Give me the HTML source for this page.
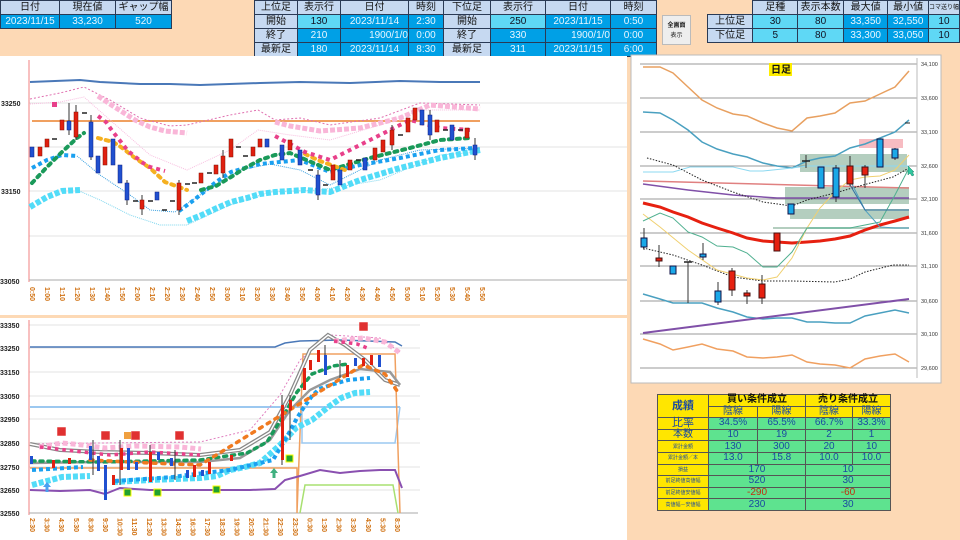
<!DOCTYPE html>
<html><head><meta charset="utf-8"><style>
*{margin:0;padding:0;box-sizing:border-box}
body{width:960px;height:540px;background:#fdd9b5;position:relative;overflow:hidden;font-family:"Liberation Sans","Noto Sans CJK JP",sans-serif}
.t{position:absolute;border-collapse:collapse;font-size:10px}
.t td{border:1px solid #2a3a55;text-align:center;padding:0;height:14px;line-height:12px;white-space:nowrap;overflow:hidden}
.h{background:#c6d9f1;color:#111}
.b{background:#00a0e6;color:#e8f6ff}
.c{background:#5fd8f5;color:#112}
.btn{position:absolute;left:662px;top:15px;width:29px;height:30px;background:#eeeeee;border:1px solid #bbb;font-size:6px;text-align:center;line-height:10px;padding-top:5px;color:#222}
.r{position:absolute;left:657px;top:394px;border-collapse:collapse;font-size:10px}
.r td{border:1px solid #555;text-align:center;padding:0;height:11.6px;line-height:10px;color:#1a4aa0;white-space:nowrap}
.y{background:#ffe600}
.g{background:#5ee38f}
.s{font-size:5px}
</style></head><body>
<table class="t" style="left:0;top:0">
<tr><td class="h" style="width:59px">日付</td><td class="h" style="width:56px">現在値</td><td class="h" style="width:56px">ギャップ幅</td></tr>
<tr><td class="b">2023/11/15</td><td class="b">33,230</td><td class="b">520</td></tr>
</table>
<table class="t" style="left:254px;top:0">
<tr><td class="h" style="width:43px">上位足</td><td class="h" style="width:43px">表示行</td><td class="h" style="width:68px">日付</td><td class="h" style="width:35px">時刻</td><td class="h" style="width:47px">下位足</td><td class="h" style="width:55px">表示行</td><td class="h" style="width:65px">日付</td><td class="h" style="width:46px">時刻</td></tr>
<tr><td class="h">開始</td><td class="c">130</td><td class="b">2023/11/14</td><td class="b">2:30</td><td class="h">開始</td><td class="c">250</td><td class="b">2023/11/15</td><td class="b">0:50</td></tr>
<tr><td class="h">終了</td><td class="b">210</td><td class="b" style="text-align:right">1900/1/0</td><td class="b">0:00</td><td class="h">終了</td><td class="b">330</td><td class="b" style="text-align:right">1900/1/0</td><td class="b">0:00</td></tr>
<tr><td class="h">最新足</td><td class="b">180</td><td class="b">2023/11/14</td><td class="b">8:30</td><td class="h">最新足</td><td class="b">311</td><td class="b">2023/11/15</td><td class="b">6:00</td></tr>
</table>
<div class="btn"><b>全画面</b><br>表示</div>
<table class="t" style="left:707px;top:0">
<tr><td style="width:46px;background:#fdd9b5;border:none;border-bottom:1px solid #2a3a55"></td><td class="h" style="width:46px">足種</td><td class="h" style="width:46px">表示本数</td><td class="h" style="width:45px">最大値</td><td class="h" style="width:41px">最小値</td><td class="h" style="width:30px;font-size:6px">コマ送り幅</td></tr>
<tr><td class="h">上位足</td><td class="c">30</td><td class="c">80</td><td class="b">33,350</td><td class="b">32,550</td><td class="c">10</td></tr>
<tr><td class="h">下位足</td><td class="c">5</td><td class="c">80</td><td class="b">33,300</td><td class="b">33,050</td><td class="c">10</td></tr>
</table>

<svg style="position:absolute;left:0;top:0" width="960" height="540" font-family="Liberation Sans, sans-serif">
<rect x="0" y="56" width="627" height="259" fill="#fff"/>
<g stroke="#e3e3e3" stroke-width="1"><line x1="29" y1="103" x2="627" y2="103"/><line x1="29" y1="147" x2="627" y2="147"/><line x1="29" y1="191" x2="627" y2="191"/><line x1="29" y1="236" x2="627" y2="236"/></g>
<line x1="29" y1="60" x2="29" y2="282" stroke="#f08080"/>
<line x1="29" y1="280" x2="627" y2="280" stroke="#aaa"/>
<g font-size="7" fill="#222" font-weight="bold"><text x="1" y="106">33250</text><text x="1" y="194">33150</text><text x="0" y="284">33050</text></g>
<polyline fill="none" stroke="#4a78b8" stroke-width="2" points="30,82 80,80 100,82 140,84 170,84 200,85 260,83 300,82 350,83 400,81 440,82 480,82"/>
<line x1="32" y1="121" x2="480" y2="121" stroke="#f0a060" stroke-width="2"/>
<polyline fill="none" stroke="#e070b0" stroke-dasharray="2 2" points="30,99 60,93 84,87 110,100 140,118 170,126 187,125 230,115 258,110 275,120 300,118 330,125 380,118 420,103 480,105"/>
<polyline fill="none" stroke="#f8bfe0" stroke-dasharray="1 1" points="30,104 60,102 84,97 110,120 150,155 187,170 230,150 258,130 290,135 330,140 380,125 420,110 480,110"/>
<polyline fill="none" stroke="#f9b6d8" stroke-width="5" stroke-dasharray="5 2" points="98,96 113,106 135,120 150,127 165,131 187,133"/>
<polyline fill="none" stroke="#f9b6d8" stroke-width="5" stroke-dasharray="5 2" points="275,122 290,126 320,131 360,128 400,118 430,105 480,109"/>
<polyline fill="none" stroke="#7ed6ee" stroke-dasharray="1 1" points="77,190 100,200 130,215 160,225 187,225 230,205 270,192 320,190 380,180 440,155 480,152"/>
<polyline fill="none" stroke="#52dcf8" stroke-width="6" stroke-dasharray="5 2" points="30,207 47,197 62,191 80,190"/>
<polyline fill="none" stroke="#52dcf8" stroke-width="6" stroke-dasharray="5 2" points="187,221 202,215 217,208 231,202 247,198 260,194 275,192 305,190 330,192 360,180 400,168 440,158 480,150"/>
<polyline fill="none" stroke="#3aa0e0" stroke-dasharray="1 1" points="77,156 100,175 130,195 150,210 175,212 200,195 240,170 270,164 300,170 330,185 380,160 420,150 480,148"/>
<polyline fill="none" stroke="#1aa0f0" stroke-width="4" stroke-dasharray="4 3" points="32,168 47,160 62,155 77,156"/>
<polyline fill="none" stroke="#1aa0f0" stroke-width="4" stroke-dasharray="4 3" points="179,211 194,200 216,182 231,172 245,168 260,164 300,160 330,172 360,165 400,158 440,150 475,148"/>
<polyline fill="none" stroke="#1a9a5a" stroke-width="4" stroke-dasharray="3 5" stroke-linecap="round" points="32,183 47,167 62,152 77,138 84,133"/>
<polyline fill="none" stroke="#1a9a5a" stroke-width="4" stroke-dasharray="3 5" stroke-linecap="round" points="201,190 216,186 231,177 245,168 260,160 275,155 290,153 330,170 370,158 410,148 440,140 470,138"/>
<polyline fill="none" stroke="#f5b020" stroke-width="4" stroke-dasharray="3 5" stroke-linecap="round" points="98,138 113,142 121,147 135,158 150,168 165,182 187,190"/>
<polyline fill="none" stroke="#f5b020" stroke-width="4" stroke-dasharray="3 5" stroke-linecap="round" points="305,154 320,161 345,170"/>
<polyline fill="none" stroke="#e8408a" stroke-width="4" stroke-dasharray="4 4" points="98,116 106,122 113,132 121,142 128,151 143,163 150,167 165,171"/>
<polyline fill="none" stroke="#e8408a" stroke-width="4" stroke-dasharray="4 4" points="275,136 290,144 305,152 330,160 370,140 410,120 440,128 470,130"/>
<rect x="52" y="102" width="5" height="5" fill="#e8408a"/>
<g stroke="#333" stroke-width="1">
<line x1="69" y1="103" x2="69" y2="135"/><line x1="76" y1="105" x2="76" y2="140"/><line x1="91" y1="115" x2="91" y2="160"/><line x1="127" y1="180" x2="127" y2="205"/><line x1="142" y1="195" x2="142" y2="215"/><line x1="179" y1="180" x2="179" y2="215"/><line x1="223" y1="150" x2="223" y2="178"/><line x1="318" y1="170" x2="318" y2="200"/><line x1="392" y1="125" x2="392" y2="150"/><line x1="430" y1="110" x2="430" y2="140"/><line x1="475" y1="138" x2="475" y2="160"/>
</g>
<g fill="#2050d0" stroke="#102080" stroke-width=".5">
<rect x="30" y="147" width="4" height="10"/><rect x="67" y="121" width="4" height="9"/><rect x="89" y="122" width="4" height="35"/><rect x="96" y="156" width="4" height="17"/><rect x="111" y="139" width="4" height="26"/><rect x="118" y="165" width="4" height="18"/><rect x="125" y="183" width="4" height="17"/><rect x="155" y="192" width="4" height="8"/><rect x="265" y="139" width="4" height="8"/><rect x="280" y="145" width="4" height="15"/><rect x="298" y="150" width="4" height="15"/><rect x="316" y="175" width="4" height="20"/><rect x="338" y="170" width="4" height="15"/><rect x="363" y="158" width="4" height="12"/><rect x="420" y="110" width="4" height="15"/><rect x="428" y="115" width="4" height="20"/><rect x="450" y="125" width="4" height="15"/><rect x="473" y="145" width="4" height="10"/>
</g>
<g fill="#e02010" stroke="#801000" stroke-width=".5">
<rect x="38" y="147" width="4" height="9"/><rect x="45" y="139" width="4" height="8"/><rect x="60" y="120" width="4" height="10"/><rect x="74" y="112" width="4" height="25"/><rect x="103" y="147" width="4" height="18"/><rect x="140" y="200" width="4" height="9"/><rect x="177" y="183" width="4" height="27"/><rect x="199" y="173" width="4" height="10"/><rect x="214" y="165" width="4" height="9"/><rect x="221" y="156" width="4" height="17"/><rect x="229" y="139" width="4" height="18"/><rect x="251" y="147" width="4" height="9"/><rect x="258" y="139" width="4" height="8"/><rect x="288" y="140" width="4" height="10"/><rect x="331" y="165" width="4" height="15"/><rect x="348" y="160" width="4" height="10"/><rect x="373" y="148" width="4" height="12"/><rect x="381" y="140" width="4" height="12"/><rect x="390" y="130" width="4" height="15"/><rect x="406" y="118" width="4" height="14"/><rect x="413" y="108" width="4" height="12"/><rect x="435" y="120" width="4" height="12"/><rect x="465" y="128" width="4" height="10"/>
</g>
<g stroke="#222" stroke-width="1.5"><line x1="52" y1="139" x2="57" y2="139"/><line x1="82" y1="113" x2="87" y2="113"/><line x1="133" y1="201" x2="138" y2="201"/><line x1="148" y1="201" x2="153" y2="201"/><line x1="162" y1="210" x2="167" y2="210"/><line x1="170" y1="201" x2="175" y2="201"/><line x1="185" y1="184" x2="190" y2="184"/><line x1="192" y1="183" x2="197" y2="183"/><line x1="207" y1="173" x2="212" y2="173"/><line x1="236" y1="147" x2="241" y2="147"/><line x1="243" y1="156" x2="248" y2="156"/><line x1="308" y1="170" x2="313" y2="170"/><line x1="323" y1="185" x2="328" y2="185"/><line x1="356" y1="160" x2="361" y2="160"/><line x1="398" y1="135" x2="403" y2="135"/><line x1="443" y1="130" x2="448" y2="130"/><line x1="458" y1="130" x2="463" y2="130"/></g>
<g font-size="7" fill="#d07010" font-weight="bold">
<text transform="translate(30,287) rotate(90)">0:50</text><text transform="translate(45,287) rotate(90)">1:00</text><text transform="translate(60,287) rotate(90)">1:10</text><text transform="translate(75,287) rotate(90)">1:20</text><text transform="translate(90,287) rotate(90)">1:30</text><text transform="translate(105,287) rotate(90)">1:40</text><text transform="translate(120,287) rotate(90)">1:50</text><text transform="translate(135,287) rotate(90)">2:00</text><text transform="translate(150,287) rotate(90)">2:10</text><text transform="translate(165,287) rotate(90)">2:20</text><text transform="translate(180,287) rotate(90)">2:30</text><text transform="translate(195,287) rotate(90)">2:40</text><text transform="translate(210,287) rotate(90)">2:50</text><text transform="translate(225,287) rotate(90)">3:00</text><text transform="translate(240,287) rotate(90)">3:10</text><text transform="translate(255,287) rotate(90)">3:20</text><text transform="translate(270,287) rotate(90)">3:30</text><text transform="translate(285,287) rotate(90)">3:40</text><text transform="translate(300,287) rotate(90)">3:50</text><text transform="translate(315,287) rotate(90)">4:00</text><text transform="translate(330,287) rotate(90)">4:10</text><text transform="translate(345,287) rotate(90)">4:20</text><text transform="translate(360,287) rotate(90)">4:30</text><text transform="translate(375,287) rotate(90)">4:40</text><text transform="translate(390,287) rotate(90)">4:50</text><text transform="translate(405,287) rotate(90)">5:00</text><text transform="translate(420,287) rotate(90)">5:10</text><text transform="translate(435,287) rotate(90)">5:20</text><text transform="translate(450,287) rotate(90)">5:30</text><text transform="translate(465,287) rotate(90)">5:40</text><text transform="translate(480,287) rotate(90)">5:50</text>
</g>

<rect x="0" y="318" width="627" height="222" fill="#fff"/>
<g stroke="#e3e3e3"><line x1="29" y1="325" x2="420" y2="325"/><line x1="29" y1="348" x2="420" y2="348"/><line x1="29" y1="372" x2="420" y2="372"/><line x1="29" y1="396" x2="420" y2="396"/><line x1="29" y1="419" x2="420" y2="419"/><line x1="29" y1="443" x2="420" y2="443"/><line x1="29" y1="467" x2="420" y2="467"/><line x1="29" y1="490" x2="420" y2="490"/></g>
<line x1="29" y1="320" x2="29" y2="515" stroke="#f08080"/>
<line x1="29" y1="513" x2="418" y2="513" stroke="#aaa"/>
<g font-size="7" fill="#222" font-weight="bold"><text x="0" y="328">33350</text><text x="0" y="351">33250</text><text x="0" y="375">33150</text><text x="0" y="399">33050</text><text x="0" y="422">32950</text><text x="0" y="446">32850</text><text x="0" y="470">32750</text><text x="0" y="493">32650</text><text x="0" y="516">32550</text></g>
<polyline fill="none" stroke="#4a78b8" stroke-width="1.5" points="30,347 100,347 150,347 200,347 275,347 285,343 300,341 340,340 395,342 402,346"/>
<line x1="30" y1="407" x2="400" y2="407" stroke="#9cc8f0" stroke-width="2"/>
<polyline fill="none" stroke="#9cc8f0" stroke-width="1.5" points="302,407 302,443 395,443 400,407"/>
<polyline fill="none" stroke="#f0a060" stroke-width="1.5" points="30,468 297,468 297,513 303,354 395,354 400,513"/>
<polyline fill="none" stroke="#a8e070" stroke-width="1.5" points="300,513 305,485 393,485 398,513"/>
<polyline fill="none" stroke="#8a50b0" stroke-width="2" points="30,490 60,491 90,490 105,494 120,488 150,490 200,490 250,490 275,489 285,480 300,476 320,470 340,473 360,471 380,470 395,470 402,488"/>
<polyline fill="none" stroke="#e080c0" stroke-dasharray="2 2" points="30,444 100,443 200,442 250,430 280,395 300,360 330,335 380,338 400,352"/>
<polyline fill="none" stroke="#888" stroke-width="4" points="30,444 60,450 100,452 150,453 200,455 240,450 270,432 290,395 310,350 328,335 345,345 365,360 385,380 400,385"/>
<polyline fill="none" stroke="#fff" stroke-width="1.5" points="30,444 60,450 100,452 150,453 200,455 240,450 270,432 290,395 310,350 328,335 345,345 365,360 385,380 400,385"/>
<polyline fill="none" stroke="#999" stroke-width="2.5" points="30,463 100,462 200,462 240,458 270,440 290,410 310,390 330,380 360,369 390,372 400,385"/>
<polyline fill="none" stroke="#52dcf8" stroke-width="6" stroke-dasharray="5 2" points="32,485 47,481 62,477 90,476"/>
<polyline fill="none" stroke="#52dcf8" stroke-width="6" stroke-dasharray="5 2" points="113,482 150,480 200,478 217,476 230,470 245,467 260,463 280,445 296,428 312,420 327,408 341,398 355,393 370,392"/>
<polyline fill="none" stroke="#1aa0f0" stroke-width="4" stroke-dasharray="4 3" points="32,470 83,467"/>
<polyline fill="none" stroke="#1aa0f0" stroke-width="4" stroke-dasharray="4 3" points="115,481 173,477 187,475 230,470 260,463 273,460 289,433 297,418 304,407 312,396 319,389 334,384 348,380 370,378"/>
<polyline fill="none" stroke="#f9b6d8" stroke-width="5" stroke-dasharray="5 3" points="39,447 62,443 83,445 105,448 135,446 180,447 201,449"/>
<polyline fill="none" stroke="#f9b6d8" stroke-width="5" stroke-dasharray="5 3" points="334,341 363,338 385,342 400,353"/>
<polyline fill="none" stroke="#e8408a" stroke-width="3.5" stroke-dasharray="3.5 4" points="40,447 83,452 110,455 150,452 200,455"/>
<polyline fill="none" stroke="#e8408a" stroke-width="3.5" stroke-dasharray="3.5 4" points="334,341 357,344 370,349"/>
<polyline fill="none" stroke="#1a9a5a" stroke-width="3.5" stroke-dasharray="3 5" stroke-linecap="round" points="32,461 100,462 200,460 247,453 267,442 282,418 297,392 312,374 333,366 348,364"/>
<polyline fill="none" stroke="#f07a20" stroke-width="3.5" stroke-dasharray="3 6" stroke-linecap="round" points="90,460 150,463 200,465 363,365 385,374 400,395"/>
<g stroke="#333"><line x1="93" y1="440" x2="93" y2="475"/><line x1="120" y1="440" x2="120" y2="485"/><line x1="150" y1="445" x2="150" y2="480"/><line x1="175" y1="450" x2="175" y2="480"/><line x1="282" y1="395" x2="282" y2="465"/><line x1="290" y1="395" x2="290" y2="440"/><line x1="325" y1="345" x2="325" y2="375"/><line x1="340" y1="360" x2="340" y2="378"/></g>
<g fill="#2050d0"><rect x="30" y="456" width="3" height="8"/><rect x="89" y="446" width="3" height="14"/><rect x="97" y="456" width="3" height="15"/><rect x="104" y="465" width="3" height="35"/><rect x="127" y="448" width="3" height="22"/><rect x="135" y="462" width="3" height="8"/><rect x="157" y="452" width="3" height="8"/><rect x="170" y="458" width="3" height="8"/><rect x="186" y="470" width="3" height="8"/><rect x="201" y="470" width="3" height="6"/><rect x="324" y="355" width="3" height="20"/><rect x="354" y="358" width="3" height="8"/><rect x="378" y="355" width="3" height="12"/></g>
<g fill="#e02010"><rect x="52" y="460" width="3" height="8"/><rect x="68" y="458" width="3" height="6"/><rect x="112" y="475" width="3" height="10"/><rect x="120" y="448" width="3" height="22"/><rect x="149" y="452" width="3" height="30"/><rect x="193" y="465" width="3" height="12"/><rect x="208" y="462" width="3" height="12"/><rect x="230" y="455" width="3" height="6"/><rect x="281" y="405" width="3" height="55"/><rect x="289" y="400" width="3" height="10"/><rect x="303" y="368" width="3" height="22"/><rect x="309" y="360" width="3" height="10"/><rect x="317" y="350" width="3" height="12"/><rect x="346" y="365" width="3" height="12"/><rect x="362" y="358" width="3" height="8"/><rect x="370" y="355" width="3" height="10"/></g>
<g stroke="#e03030" fill="#fff" stroke-width="1.5"><rect x="58" y="428" width="7" height="7" fill="#e03030"/><rect x="102" y="432" width="7" height="7" fill="#e03030"/><rect x="132" y="432" width="7" height="7" fill="#e03030"/><rect x="176" y="432" width="7" height="7" fill="#e03030"/><rect x="360" y="323" width="7" height="7" fill="#e03030"/></g>
<rect x="124" y="432" width="7" height="7" fill="#f0a040"/>
<g fill="#20a030" stroke="#ff0" stroke-width="1"><rect x="124" y="489" width="7" height="7"/><rect x="154" y="489" width="7" height="7"/><rect x="213" y="486" width="7" height="7"/><rect x="286" y="455" width="7" height="7"/></g>
<path d="M47 482 l-4 5 h2.5 v5 h3 v-5 h2.5z" fill="#4aa0f0"/>
<path d="M274 468 l-4 5 h2.5 v5 h3 v-5 h2.5z" fill="#40b080"/>
<g font-size="7" fill="#d07010" font-weight="bold">
<text transform="translate(30,518) rotate(90)">2:30</text><text transform="translate(44.6,518) rotate(90)">3:30</text><text transform="translate(59.2,518) rotate(90)">4:30</text><text transform="translate(73.8,518) rotate(90)">5:30</text><text transform="translate(88.4,518) rotate(90)">8:30</text><text transform="translate(103,518) rotate(90)">9:30</text><text transform="translate(117.6,518) rotate(90)">10:30</text><text transform="translate(132.2,518) rotate(90)">11:30</text><text transform="translate(146.8,518) rotate(90)">12:30</text><text transform="translate(161.4,518) rotate(90)">13:30</text><text transform="translate(176,518) rotate(90)">14:30</text><text transform="translate(190.6,518) rotate(90)">16:30</text><text transform="translate(205.2,518) rotate(90)">17:30</text><text transform="translate(219.8,518) rotate(90)">18:30</text><text transform="translate(234.4,518) rotate(90)">19:30</text><text transform="translate(249,518) rotate(90)">20:30</text><text transform="translate(263.6,518) rotate(90)">21:30</text><text transform="translate(278.2,518) rotate(90)">22:30</text><text transform="translate(292.8,518) rotate(90)">23:30</text><text transform="translate(307.4,518) rotate(90)">0:30</text><text transform="translate(322,518) rotate(90)">1:30</text><text transform="translate(336.6,518) rotate(90)">2:30</text><text transform="translate(351.2,518) rotate(90)">3:30</text><text transform="translate(365.8,518) rotate(90)">4:30</text><text transform="translate(380.4,518) rotate(90)">5:30</text><text transform="translate(395,518) rotate(90)">8:30</text>
</g>

<rect x="631" y="55" width="310" height="328" fill="#fff" stroke="#bbb"/>
<g stroke="#999"><line x1="640" y1="64" x2="917" y2="64"/><line x1="640" y1="98" x2="917" y2="98"/><line x1="640" y1="132" x2="917" y2="132"/><line x1="640" y1="166" x2="917" y2="166"/><line x1="640" y1="199" x2="917" y2="199"/><line x1="640" y1="233" x2="917" y2="233"/><line x1="640" y1="266" x2="917" y2="266"/><line x1="640" y1="301" x2="917" y2="301"/><line x1="640" y1="334" x2="917" y2="334"/><line x1="640" y1="368" x2="917" y2="368"/></g>
<line x1="917" y1="58" x2="917" y2="378" stroke="#bbb"/>
<g font-size="5.5" fill="#333"><text x="921" y="66">34,100</text><text x="921" y="100">33,600</text><text x="921" y="134">33,100</text><text x="921" y="168">32,600</text><text x="921" y="201">32,100</text><text x="921" y="235">31,600</text><text x="921" y="268">31,100</text><text x="921" y="303">30,600</text><text x="921" y="336">30,100</text><text x="921" y="370">29,600</text></g>
<rect x="769" y="63" width="23" height="13" fill="#ffee00"/><text x="771" y="73" font-size="10" font-weight="bold" fill="#111" font-family="Liberation Sans, Noto Sans CJK JP, sans-serif">日足</text>
<rect x="800" y="154" width="107" height="18" fill="#6a9e80" opacity=".5"/>
<rect x="785" y="187" width="124" height="17" fill="#6a9e80" opacity=".5"/>
<rect x="790" y="209" width="119" height="10" fill="#6a9e80" opacity=".5"/>
<rect x="773" y="227" width="136" height="2" fill="#6a9e80" opacity=".5"/>
<rect x="859" y="139" width="44" height="9" fill="#f4a0a8" opacity=".7"/>
<polyline fill="none" stroke="#e8a060" stroke-width="1.5" points="643,67 660,67 673,73 688,87 702,100 717,108 733,114 747,116 763,123 777,128 792,131 807,118 820,116 835,113 850,103 865,101 880,94 895,87 909,71"/>
<polyline fill="none" stroke="#4aa0c0" stroke-width="1.5" points="643,112 660,113 673,120 688,130 702,142 717,149 733,154 747,157 763,163 777,166 792,168 807,161 820,158 835,156 850,148 865,144 880,138 895,132 909,120"/>
<polyline fill="none" stroke="#4aa0c0" stroke-width="1.5" points="643,294 660,299 673,303 688,303 702,303 717,308 733,312 747,317 763,319 777,318 792,318 807,322 820,322 835,323 850,323 865,316 880,313 895,310 909,313"/>
<polyline fill="none" stroke="#f0a060" stroke-width="1.5" points="643,339 660,344 673,350 688,347 702,344 717,349 733,351 747,357 763,358 777,357 792,355 807,362 820,364 835,365 850,368 865,359 880,356 895,354 909,362"/>
<line x1="643" y1="333" x2="909" y2="299" stroke="#8050a8" stroke-width="2"/>
<polyline fill="none" stroke="#8050a8" stroke-width="1.5" points="643,184 688,190 733,195 777,198 909,198"/>
<line x1="643" y1="181" x2="909" y2="188" stroke="#e08080" stroke-width="1.5"/>
<polyline fill="none" stroke="#8cd8f0" stroke-width="1" points="643,172 673,172 690,167 733,167 750,171 763,171 792,168 807,166 909,166"/>
<polyline fill="none" stroke="#e62010" stroke-width="3" points="643,203 660,207 673,212 688,217 702,223 717,228 733,233 747,238 763,241 777,242 792,243 807,242 820,241 835,239 850,236 865,230 880,225 895,221 909,217"/>
<polyline fill="none" stroke="#222" stroke-width="1" stroke-dasharray="1.5 1.5" points="647,158 673,165 702,180 733,192 763,202 792,206 807,200 835,193 863,185 893,177 909,168"/>
<polyline fill="none" stroke="#222" stroke-width="1" stroke-dasharray="1.5 1.5" points="643,248 673,255 702,265 733,277 763,281 792,281 835,282 850,279 865,272 893,265 909,265"/>
<polyline fill="none" stroke="#f0d070" stroke-width="1" points="643,214 660,227 688,250 717,270 747,278 763,280 777,277 792,258 807,228 820,208 835,192 850,180 865,177 880,176 895,170 909,155"/>
<polyline fill="none" stroke="#50b090" stroke-width="1" points="643,221 660,213 673,218 688,232 702,237 717,246 733,247 747,253 763,267 777,267 792,252 807,228 850,228 880,222 895,195 909,168"/>
<polyline fill="none" stroke="#50a0c0" stroke-width="1" points="850,180 865,210 880,227 895,228 909,228"/>
<polyline fill="none" stroke="#3070a0" stroke-width="1" points="850,185 865,210 909,210"/>
<g stroke="#333"><line x1="644" y1="228" x2="644" y2="250"/><line x1="659" y1="245" x2="659" y2="267"/><line x1="688" y1="262" x2="688" y2="303"/><line x1="703" y1="243" x2="703" y2="260"/><line x1="718" y1="282" x2="718" y2="305"/><line x1="732" y1="268" x2="732" y2="296"/><line x1="747" y1="290" x2="747" y2="304"/><line x1="762" y1="275" x2="762" y2="304"/><line x1="806" y1="155" x2="806" y2="168"/><line x1="836" y1="165" x2="836" y2="202"/><line x1="850" y1="156" x2="850" y2="186"/><line x1="865" y1="165" x2="865" y2="188"/><line x1="895" y1="148" x2="895" y2="160"/></g>
<g fill="#1aa8e8" stroke="#114"><rect x="641" y="238" width="6" height="9"/><rect x="670" y="266" width="6" height="8"/><rect x="700" y="254" width="6" height="3"/><rect x="715" y="291" width="6" height="11"/><rect x="788" y="204" width="6" height="10"/><rect x="818" y="167" width="6" height="21"/><rect x="833" y="168" width="6" height="29"/><rect x="877" y="139" width="6" height="28"/><rect x="892" y="149" width="6" height="9"/></g>
<g fill="#e62010" stroke="#411"><rect x="656" y="258" width="6" height="3"/><rect x="729" y="271" width="6" height="19"/><rect x="744" y="293" width="6" height="3"/><rect x="759" y="284" width="6" height="14"/><rect x="774" y="233" width="6" height="18"/><rect x="847" y="166" width="6" height="18"/><rect x="862" y="167" width="6" height="8"/></g>
<line x1="684" y1="262" x2="692" y2="262" stroke="#222" stroke-width="1.5"/><line x1="802" y1="161" x2="810" y2="161" stroke="#222" stroke-width="1.5"/><line x1="905" y1="123" x2="910" y2="123" stroke="#222"/>
<path d="M908 166 l6 6 l-2 0 l2 3 l-2 1 l-2 -3 l-2 2z" fill="#30c8a0" stroke="#108060" stroke-width=".5"/>
</svg>

<table class="r">
<tr><td class="y" rowspan="2" style="width:51px;font-size:11px;font-weight:bold">成績</td><td class="y" colspan="2" style="font-weight:bold;color:#111">買い条件成立</td><td class="y" colspan="2" style="font-weight:bold;color:#111">売り条件成立</td></tr>
<tr><td class="y" style="width:49px">陰線</td><td class="y" style="width:48px">陽線</td><td class="y" style="width:47px">陰線</td><td class="y" style="width:38px">陽線</td></tr>
<tr><td class="y" style="font-size:11px">比率</td><td class="g">34.5%</td><td class="g">65.5%</td><td class="g">66.7%</td><td class="g">33.3%</td></tr>
<tr><td class="y">本数</td><td class="g">10</td><td class="g">19</td><td class="g">2</td><td class="g">1</td></tr>
<tr><td class="y s">累計金額</td><td class="g">130</td><td class="g">300</td><td class="g">20</td><td class="g">10</td></tr>
<tr><td class="y s">累計金額／本</td><td class="g">13.0</td><td class="g">15.8</td><td class="g">10.0</td><td class="g">10.0</td></tr>
<tr><td class="y s">損益</td><td class="g" colspan="2">170</td><td class="g" colspan="2">10</td></tr>
<tr><td class="y s">前足終値高値幅</td><td class="g" colspan="2">520</td><td class="g" colspan="2">30</td></tr>
<tr><td class="y s">前足終値安値幅</td><td class="g" colspan="2" style="color:#c03010">-290</td><td class="g" colspan="2" style="color:#c03010">-60</td></tr>
<tr><td class="y s">高値幅－安値幅</td><td class="g" colspan="2">230</td><td class="g" colspan="2">30</td></tr>
</table>
</body></html>
